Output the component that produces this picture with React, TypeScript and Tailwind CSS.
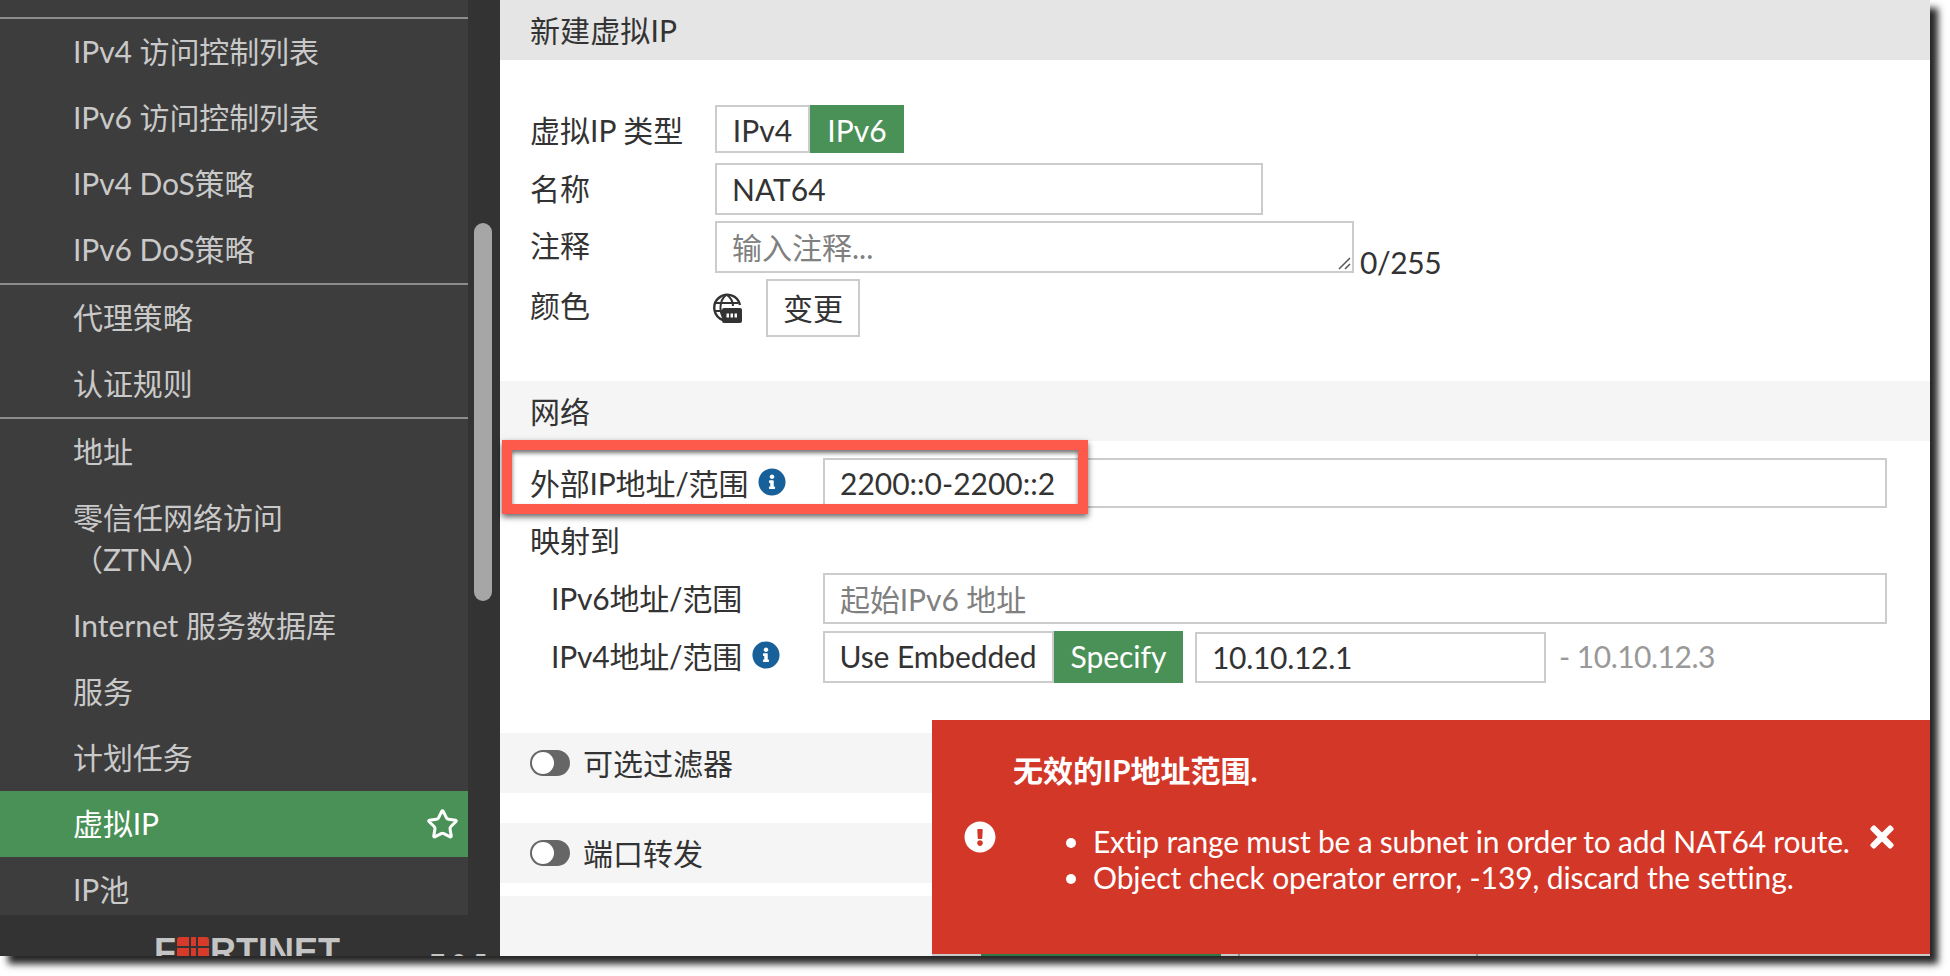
import React from 'react'
import { Star } from 'lucide-react'
import { FaExclamationCircle, FaInfoCircle, FaTimes } from 'react-icons/fa'

const fontStack = 'font-["Lato","Noto_Sans_CJK_SC",sans-serif]'

const NavRow = ({ label, active, tracking = 'tracking-[-0.1px]' }: { label: string; active?: boolean; tracking?: string }) => (
  <div
    className={`flex items-center justify-between h-[66px] pl-[73px] pr-[9px] pb-[2px] text-[30px] leading-[42px] ${tracking} ${
      active ? 'bg-[#4a9158] text-white' : 'text-[#c9c9c9]'
    }`}
  >
    <span>{label}</span>
    {active && <Star size={33} strokeWidth={2.2} className="text-white mt-[2px]" />}
  </div>
)

const Divider = () => <div className="h-[2px] bg-[#8c8c8c]" />

const Sidebar = () => (
  <aside className="w-[500px] shrink-0 h-full flex flex-col bg-[#333333] overflow-hidden">
    <div className="flex h-[915px] shrink-0 overflow-hidden">
      <nav className="w-[468px] shrink-0 bg-[#3d3d3d] pt-[17px]">
        <Divider />
        <NavRow label="IPv4 访问控制列表" />
        <NavRow label="IPv6 访问控制列表" />
        <NavRow label="IPv4 DoS策略" />
        <NavRow label="IPv6 DoS策略" />
        <Divider />
        <NavRow label="代理策略" />
        <NavRow label="认证规则" />
        <Divider />
        <NavRow label="地址" />
        <div className="pl-[73px] pt-[11px] pb-[13px] text-[30px] leading-[42px] text-[#c9c9c9]">
          <div>零信任网络访问</div>
          <div>（ZTNA）</div>
        </div>
        <NavRow label="Internet 服务数据库" tracking="tracking-[0px]" />
        <NavRow label="服务" />
        <NavRow label="计划任务" />
        <NavRow label="虚拟IP" active />
        <NavRow label="IP池" />
      </nav>
      <div className="flex-1 pl-[6px] pt-[223px]">
        <div className="w-[18px] h-[378px] bg-[#a6a6a6] rounded-[9px]" />
      </div>
    </div>
    <div className="h-[2px] w-[498px] bg-[#8c8c8c]" />
    <div className="flex items-start pl-[154px] pt-[22px] text-[#c4c4c4]">
      <div className="flex items-start text-[36px] leading-[30px] font-bold font-['Liberation_Sans',sans-serif]">
        <span>F</span>
        <svg width="32" height="32" viewBox="0 0 32 32" className="mx-[1px]">
          <path d="M0 3a3 3 0 0 1 3-3h9v9H0z M14 0h5v9h-5z M21 0h8a3 3 0 0 1 3 3v6H21z M0 11h12v8H0z M14 11h5v8h-5z M21 11h11v8H21z" fill="#d63a2a" />
        </svg>
        <span>RTINET</span>
      </div>
      <span className="ml-[90px] mt-[12px] text-[26px] leading-[30px]">7.0.5</span>
    </div>
  </aside>
)

const SectionBar = ({ children, className = '' }: { children: React.ReactNode; className?: string }) => (
  <div className={`h-[60px] bg-[#f5f5f5] flex items-center pl-[30px] ${className}`}>{children}</div>
)

const Field = ({ className = '', children }: { className?: string; children?: React.ReactNode }) => (
  <div className={`border-2 border-[#cccccc] pl-[15px] flex items-center bg-white ${className}`}>{children}</div>
)

const ToggleSwitch = () => (
  <div className="w-[40px] h-[26px] rounded-full bg-[#666666] p-[2px] mr-[13px]">
    <div className="w-[22px] h-[22px] rounded-full bg-white" />
  </div>
)

const InfoIcon = ({ className }: { className: string }) => <FaInfoCircle size={28} className={`text-[#17609a] ${className}`} />

const ColorIcon = () => (
  <svg width="30" height="30" viewBox="0 0 30 30" fill="none" stroke="#333333" strokeWidth="2.4">
    <path d="M11 27A13 13 0 1 1 28 12" />
    <path d="M14 2c-7 6-7 17-2 24M15 2c4 3 6 7 6 11M3 10h23M2.500 18h9" strokeWidth="2" />
    <rect x="10" y="15" width="20" height="15" rx="2" fill="#333333" stroke="none" />
    <path d="M14.500 22.500h3M18.500 22.500h3M22.500 22.500h3" stroke="#ffffff" strokeWidth="4" strokeDasharray="2.500 1.500" />
  </svg>
)

const Form = () => (
  <main className="flex-1 min-w-0 h-full flex flex-col bg-white overflow-hidden">
    <div className="h-[60px] shrink-0 bg-[#e5e5e5] flex items-center pl-[30px] tracking-[0.1px]">新建虚拟IP</div>

    <div className="pl-[30px] pt-[45px] h-[321px] shrink-0">
      <div className="flex items-center h-[48px]">
        <label className="w-[185px] pt-[2px]">虚拟IP 类型</label>
        <div className="flex h-[48px] leading-none">
          <div className="w-[95px] border-2 border-[#cccccc] flex items-center justify-center pt-[2px]">IPv4</div>
          <div className="w-[94px] bg-[#4a9158] text-white flex items-center justify-center pt-[2px]">IPv6</div>
        </div>
      </div>
      <div className="flex items-center mt-[10px]">
        <label className="w-[185px] pb-[2px]">名称</label>
        <Field className="w-[548px] h-[52px]">NAT64</Field>
      </div>
      <div className="flex items-start mt-[6px]">
        <label className="w-[185px] h-[52px] flex items-center pb-[3px]">注释</label>
        <Field className="w-[639px] h-[52px] text-[#808080] relative">
          输入注释...
          <svg width="14" height="14" viewBox="0 0 14 14" stroke="#555555" strokeWidth="1.500" className="absolute right-[1px] bottom-[1px]">
            <path d="M13 2 2 13M13 8l-5 5" />
          </svg>
        </Field>
        <span className="ml-[6px] mt-[26px] leading-none tracking-[-0.4px]">0/255</span>
      </div>
      <div className="flex items-center mt-[2px]">
        <label className="w-[182px] pb-[5px]">颜色</label>
        <ColorIcon />
        <button className="ml-[24px] w-[94px] h-[58px] border-2 border-[#cccccc]">变更</button>
      </div>
    </div>

    <SectionBar className="shrink-0">网络</SectionBar>

    <div className="pl-[30px] pt-[17px] h-[292px] shrink-0">
      <div className="flex items-center h-[50px]">
        <label className="w-[293px] flex items-center tracking-[-0.2px]">
          外部IP地址/范围
          <InfoIcon className="ml-[10px] mb-[3px]" />
        </label>
        <Field className="w-[1064px] h-[50px]">2200::0-2200::2</Field>
      </div>
      <div className="h-[65px] flex items-center pb-[1px]">映射到</div>
      <div className="flex items-center h-[51px] pl-[21px]">
        <label className="w-[272px] tracking-[-0.2px]">IPv6地址/范围</label>
        <Field className="w-[1064px] h-[51px] text-[#808080] tracking-[-0.1px] pt-[1px]">起始IPv6 地址</Field>
      </div>
      <div className="flex items-center h-[52px] pl-[21px] mt-[7px]">
        <label className="w-[272px] flex items-center tracking-[-0.2px] pb-[1px]">
          IPv4地址/范围
          <InfoIcon className="ml-[10px] mb-[3px]" />
        </label>
        <div className="flex h-[52px]">
          <div className="w-[231px] border-2 border-[#cccccc] flex items-center justify-center tracking-[-0.1px] pb-[2px] pr-[1px]">Use Embedded</div>
          <div className="w-[129px] bg-[#4a9158] text-white flex items-center justify-center pb-[2px]">Specify</div>
        </div>
        <Field className="w-[351px] h-[51px] ml-[12px] tracking-[-0.3px]">10.10.12.1</Field>
        <span className="ml-[13px] text-[#999999] tracking-[-0.5px] pb-[2px]">- 10.10.12.3</span>
      </div>
    </div>

    <SectionBar className="shrink-0">
      <ToggleSwitch />
      可选过滤器
    </SectionBar>
    <div className="h-[30px] shrink-0" />
    <SectionBar className="shrink-0">
      <ToggleSwitch />
      端口转发
    </SectionBar>
    <div className="h-[13px] shrink-0" />
    <div className="h-[60px] shrink-0 bg-[#f5f5f5] flex items-start pl-[432px] pt-[58px]">
      <div className="w-[49px] h-[40px] bg-[#c8c8c8]" />
      <div className="w-[240px] h-[40px] bg-[#2d7a47]" />
      <div className="w-[19px] h-[40px] bg-[#c8c8c8] border-r-2 border-[#8f8f8f]" />
      <div className="w-[238px] h-[40px] bg-[#c8c8c8] border-r-2 border-[#8f8f8f]" />
      <div className="w-[452px] h-[40px] bg-[#c8c8c8]" />
    </div>
  </main>
)

const App: React.FC = () => {
  return (
    <div className={`relative w-[1950px] h-[976px] bg-white overflow-hidden text-[30px] text-[#333333] ${fontStack}`}>
      <div className="flex w-[1930px] h-[956px] overflow-hidden shadow-[8px_8px_7px_rgba(0,0,0,0.85)]">
        <Sidebar />
        <Form />
      </div>

      {/* red box drawn over the screenshot */}
      <div className="absolute left-[502px] top-[440px] w-[586px] h-[74px] border-[10px] border-[#fd5a4c] shadow-[0_3px_6px_rgba(0,0,0,0.6),inset_0_3px_4px_rgba(0,0,0,0.55)]" />

      {/* error toast */}
      <div className="absolute left-[932px] top-[720px] w-[998px] h-[234px] bg-[#d33728] text-white">
        <div className="absolute left-[81px] top-[30px] font-bold leading-[40px]">无效的IP地址范围.</div>
        <FaExclamationCircle size={32} className="absolute left-[32px] top-[101px]" />
        <ul className="absolute left-[161px] top-[103px] list-disc leading-[36px] whitespace-nowrap">
          <li className="tracking-[-0.22px]">Extip range must be a subnet in order to add NAT64 route.</li>
          <li className="tracking-[-0.1px]">Object check operator error, -139, discard the setting.</li>
        </ul>
        <FaTimes size={34} className="absolute left-[933px] top-[100px]" />
      </div>
    </div>
  )
}

export default App
